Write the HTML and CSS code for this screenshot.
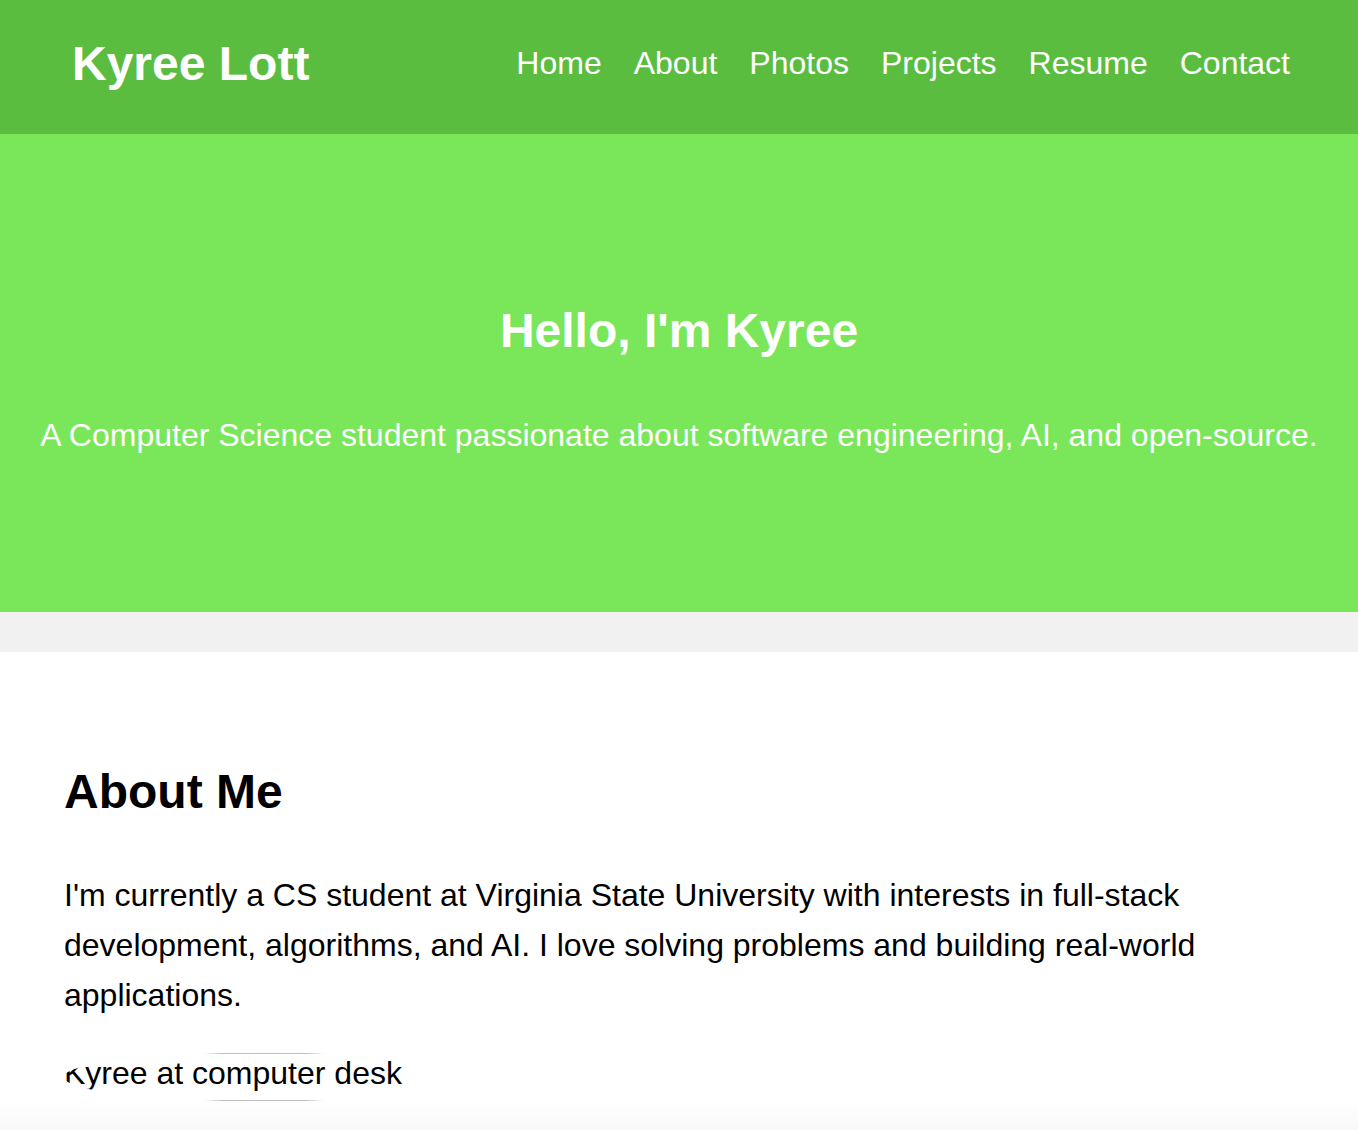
FILE: index.html
```html
<!DOCTYPE html>
<html lang="en">
<head>
<meta charset="utf-8">
<title>Kyree Lott</title>
<link rel="stylesheet" href="styles.css">
</head>
<body>
<header class="site-header">
  <div class="brand">Kyree Lott</div>
  <nav class="nav">
    <a href="#">Home</a>
    <a href="#">About</a>
    <a href="#">Photos</a>
    <a href="#">Projects</a>
    <a href="#">Resume</a>
    <a href="#">Contact</a>
  </nav>
</header>
<section class="hero">
  <h1 class="hero-title">Hello, I'm Kyree</h1>
  <p class="hero-sub">A Computer Science student passionate about software engineering, AI, and open-source.</p>
</section>
<section class="about">
  <h2 class="about-title">About Me</h2>
  <p class="about-text">I'm currently a CS student at Virginia State University with interests in full-stack development, algorithms, and AI. I love solving problems and building real-world applications.</p>
  <div class="photo" role="img" aria-label="Kyree at computer desk">
    <div class="photo-alt">Kyree at computer desk</div>
  </div>
</section>
</body>
</html>
```
FILE: styles.css
```css
* { box-sizing: border-box; }

html, body {
  margin: 0;
  padding: 0;
}

body {
  background: #f1f1f1;
  font-family: "Liberation Sans", Arial, Helvetica, sans-serif;
  color: #000;
}

.site-header {
  height: 134px;
  background: #5bbd40;
  display: flex;
  align-items: center;
  justify-content: space-between;
  padding: 0 68px 8px 72px;
}

.brand {
  color: #fff;
  font-size: 48px;
  font-weight: bold;
}

.nav {
  display: flex;
  gap: 32px;
}

.nav a {
  color: #fff;
  text-decoration: none;
  font-size: 32px;
}

.hero {
  background: #7ae65a;
  color: #fff;
  text-align: center;
  padding: 169px 20px 158px;
}

.hero-title {
  margin: 0 0 59px;
  font-size: 48px;
  font-weight: bold;
}

.hero-sub {
  margin: 0;
  font-size: 32px;
}

.about {
  margin-top: 40px;
  padding: 112px 64px 60px;
  background: linear-gradient(to bottom, #ffffff 448px, #f8f8f8 480px, #f1f1f1 520px);
}

.about-title {
  margin: 0;
  font-size: 48px;
  font-weight: bold;
}

.about-text {
  margin: 51px 0 0;
  font-size: 32px;
  line-height: 50px;
}

.photo {
  position: relative;
  width: 400px;
  height: 50px;
  margin-top: 32px;
}

.photo::before,
.photo::after {
  content: "";
  position: absolute;
  left: 140px;
  width: 120px;
  height: 1px;
  background: linear-gradient(to right, rgba(0,0,0,0), rgba(0,0,0,0.25) 15%, rgba(0,0,0,0.25) 85%, rgba(0,0,0,0));
}

.photo::before { top: 1px; }
.photo::after { bottom: 1px; }

.photo-alt {
  width: 400px;
  height: 50px;
  border-radius: 50%;
  overflow: hidden;
  white-space: nowrap;
  font-size: 32px;
  line-height: 42px;
  color: #000;
  background: #fff;
}
```
